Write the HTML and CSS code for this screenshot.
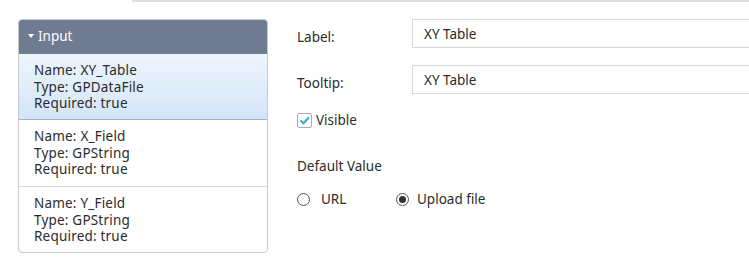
FILE: index.html
```html
<!DOCTYPE html>
<html lang="en">
<head>
    <meta charset="UTF-8">
    <title>Input Parameters</title>
    <link rel="stylesheet" href="styles.css">
</head>
<body>
    <div class="top-rule"></div>
    <div class="layout">
        <div class="param-panel">
            <div class="panel-header"><span class="caret"></span>Input</div>
            <div class="param-item selected">
                <div>Name: XY_Table</div>
                <div>Type: GPDataFile</div>
                <div>Required: true</div>
            </div>
            <div class="param-item">
                <div>Name: X_Field</div>
                <div>Type: GPString</div>
                <div>Required: true</div>
            </div>
            <div class="param-item">
                <div>Name: Y_Field</div>
                <div>Type: GPString</div>
                <div>Required: true</div>
            </div>
        </div>

        <div class="param-form">
            <div class="form-row">
                <label class="form-label">Label:</label>
                <div class="text-box">XY Table</div>
            </div>
            <div class="form-row">
                <label class="form-label">Tooltip:</label>
                <div class="text-box">XY Table</div>
            </div>
            <div class="check-row">
                <span class="check-box">
                    <svg width="13" height="13" viewBox="0 0 13 13"><path d="M2.5 6.5 L5.5 9.3 L10.8 3.6" fill="none" stroke="#2bb3d1" stroke-width="2.2"/></svg>
                </span>
                Visible
            </div>
            <div class="section-title">Default Value</div>
            <div class="radio-row">
                <span class="radio-opt"><span class="radio"></span>URL</span>
                <span class="radio-opt"><span class="radio checked"></span>Upload file</span>
            </div>
        </div>
    </div>
</body>
</html>
```

FILE: styles.css
```css
* {
    margin: 0;
    padding: 0;
    box-sizing: border-box;
}

body {
    font-family: "Noto Sans", Lato, sans-serif;
    font-size: 13.5px;
    color: #2b2b2b;
    background: #fff;
    overflow: hidden;
}

.top-rule {
    height: 2px;
    margin-left: 132px;
    background: #dcdee2;
}

.layout {
    display: flex;
    padding: 17px 0 0 18px;
}

/* Parameter list */
.param-panel {
    width: 250px;
    border: 1px solid #c6cad1;
    border-radius: 4px;
    overflow: hidden;
    flex-shrink: 0;
}

.panel-header {
    height: 34px;
    background: #6e7b91;
    color: #fff;
    padding-left: 9px;
    padding-bottom: 2px;
    display: flex;
    align-items: center;
}

.caret {
    width: 0;
    height: 0;
    border-left: 3.5px solid transparent;
    border-right: 3.5px solid transparent;
    border-top: 4px solid #fff;
    margin-right: 4px;
    margin-top: -1px;
}

.param-item {
    padding: 8px 0 4px 15px;
    line-height: 16.5px;
    border-top: 1px solid #d4d7dc;
    height: 66px;
    letter-spacing: 0.2px;
}

.param-item:nth-child(2) {
    border-top: none;
}

.param-item.selected {
    background: linear-gradient(#eef5fd, #d3e5f8);
    border-bottom: 1px solid #9db5d0;
}

.param-item.selected + .param-item {
    border-top: none;
}

/* Form */
.param-form {
    flex: 1;
    padding-left: 29px;
}

.form-row {
    display: flex;
    align-items: center;
    margin-bottom: 17px;
}

.form-label {
    width: 115px;
    padding-top: 7px;
}

.text-box {
    flex: 1;
    height: 29px;
    border: 1px solid #d6d8dc;
    border-right: none;
    padding: 5px 0 0 11px;
}

.check-row {
    display: flex;
    align-items: center;
    margin-top: 0;
}

.check-box {
    width: 15px;
    height: 15px;
    border: 1px solid #a8acb2;
    border-radius: 2px;
    margin-right: 4px;
    display: flex;
    align-items: center;
    justify-content: center;
}

.section-title {
    margin-top: 28px;
}

.radio-row {
    display: flex;
    margin-top: 15px;
}

.radio-opt {
    display: flex;
    align-items: center;
}

.radio-opt:first-child {
    width: 99px;
}

.radio {
    width: 13px;
    height: 13px;
    border: 1px solid #555;
    border-radius: 50%;
    margin-right: 11px;
    position: relative;
}

.radio-opt:last-child .radio {
    margin-right: 8px;
}

.radio.checked::after {
    content: "";
    position: absolute;
    left: 2px;
    top: 2px;
    width: 7px;
    height: 7px;
    border-radius: 50%;
    background: #333;
}
```
